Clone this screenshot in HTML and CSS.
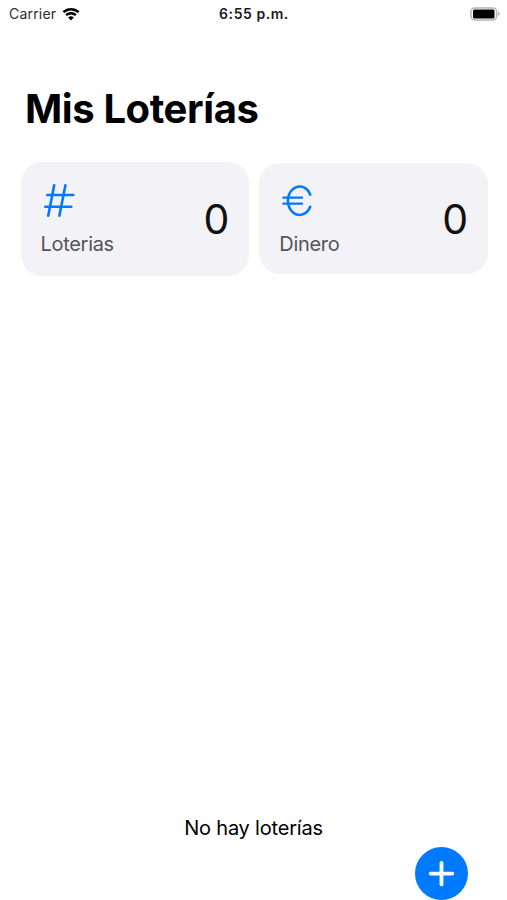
FILE: index.html
```html
<!DOCTYPE html>
<html lang="es">
  <head>
    <meta charset="UTF-8" />
    <title>Mis Loterías</title>
    <link rel="stylesheet" href="styles.css">
  </head>
  <body>
    <div class="screen">
      <!-- Barra de estado -->
      <div class="status-bar">
        <div class="status-left">
          <span class="carrier">Carrier</span>
          <svg class="wifi" viewBox="0 0 18 14">
            <path d="M1.4 5.2a11 11 0 0 1 15.2 0M4.1 8.2a7.1 7.1 0 0 1 9.8 0" />
            <path class="wifi-dot" d="M6.2 10.6a4 4 0 0 1 5.6 0L9 13.4z" />
          </svg>
        </div>
        <div class="status-time">6:55 p.m.</div>
        <div class="status-right">
          <svg class="battery" viewBox="0 0 31 14">
            <rect class="battery-case" x="0.9" y="0.9" width="25.7" height="12.2" rx="4" />
            <rect x="3" y="2.5" width="21.5" height="9" rx="1.5" />
            <path class="battery-tip" d="M28 4.5q3.4 2.5 0 5z" />
          </svg>
        </div>
      </div>

      <h1 class="title">Mis Loterías</h1>

      <!-- Resumen -->
      <div class="cards">
        <div class="card">
          <div class="card-info">
            <svg class="card-icon" viewBox="0 0 34 36">
              <path d="M13.2 2.3 7.2 32.8M24.4 2.3l-6 30.5M6.3 12h26M4.3 23.7h26" />
            </svg>
            <div class="card-label">Loterias</div>
          </div>
          <div class="card-value">0</div>
        </div>
        <div class="card card-money">
          <div class="card-info">
            <svg class="card-icon" viewBox="0 0 34 36">
              <path d="M31.2 11.6A11.7 14.2 0 1 0 31.2 23.8" />
              <path class="thin" d="M4.3 14.7h18.8M4.3 20.7h18.8" />
            </svg>
            <div class="card-label">Dinero</div>
          </div>
          <div class="card-value">0</div>
        </div>
      </div>

      <div class="empty">No hay loterías</div>

      <div class="footer">
        <button class="add-button" aria-label="Añadir">
          <svg viewBox="0 0 53 53">
            <path d="M26.5 15.8v21.6M15.7 26.6h21.6" />
          </svg>
        </button>
      </div>
    </div>
  </body>
</html>
```

FILE: styles.css
```css
body {
  margin: 0;
  background-color: #fff;
  font-family: Inter, "Liberation Sans", sans-serif;
  color: #000;
}

.screen {
  display: flex;
  flex-direction: column;
  height: 900px;
  overflow: hidden;
}

/* Barra de estado */
.status-bar {
  display: grid;
  grid-template-columns: 1fr auto 1fr;
  align-items: center;
  height: 27px;
  padding: 0 6px 0 7px;
  font-size: 14px;
}

.status-left {
  display: flex;
  align-items: center;
  gap: 6px;
  padding-left: 2px;
}

.carrier {
  color: #2c2c2c;
  letter-spacing: 0.2px;
}

.wifi {
  width: 18px;
  height: 14px;
  fill: none;
  stroke: #000;
  stroke-width: 2.5;
}

.wifi .wifi-dot {
  fill: #000;
  stroke: none;
}

.status-time {
  font-weight: 600;
  letter-spacing: 0.55px;
  color: #1a1a1a;
}

.status-right {
  display: flex;
  justify-content: flex-end;
}

.battery {
  width: 31px;
  height: 14px;
}

.battery-case {
  fill: none;
  stroke: #b5b5b5;
  stroke-width: 1.5;
}

.battery-tip {
  fill: #b5b5b5;
}

.title {
  margin: 57px 0 0 25px;
  font-size: 40px;
  line-height: 50px;
  font-weight: 700;
  letter-spacing: -0.4px;
}

/* Tarjetas */
.cards {
  display: flex;
  align-items: center;
  gap: 10px;
  margin: 28px 19px 0 20.5px;
}

.card {
  display: flex;
  flex: 1;
  align-items: center;
  justify-content: space-between;
  box-sizing: border-box;
  height: 113.5px;
  padding: 0 20px;
  border-radius: 21px;
  background-color: #f2f2f7;
}

.card-money {
  height: 111px;
}

.card-info {
  padding-top: 3px;
}

.card-icon {
  display: block;
  width: 34px;
  height: 36px;
  fill: none;
  stroke: #007aff;
  stroke-width: 2.6;
  stroke-linecap: round;
}

.card-icon .thin {
  stroke-width: 2.2;
}

.card-label {
  margin-top: 12px;
  font-size: 20px;
  line-height: 26px;
  letter-spacing: -0.3px;
  color: #555558;
}

.card-value {
  font-size: 41px;
  line-height: 50px;
  color: #111;
}

.empty {
  margin-top: auto;
  font-size: 20px;
  line-height: 26px;
  letter-spacing: -0.2px;
  text-align: center;
}

.footer {
  display: flex;
  justify-content: flex-end;
  padding: 6px 39px 0 0;
}

.add-button {
  width: 53px;
  height: 53px;
  padding: 0;
  border: none;
  border-radius: 50%;
  background-color: #007aff;
}

.add-button svg {
  display: block;
  fill: none;
  stroke: #fff;
  stroke-width: 3.8;
  stroke-linecap: round;
}
```
